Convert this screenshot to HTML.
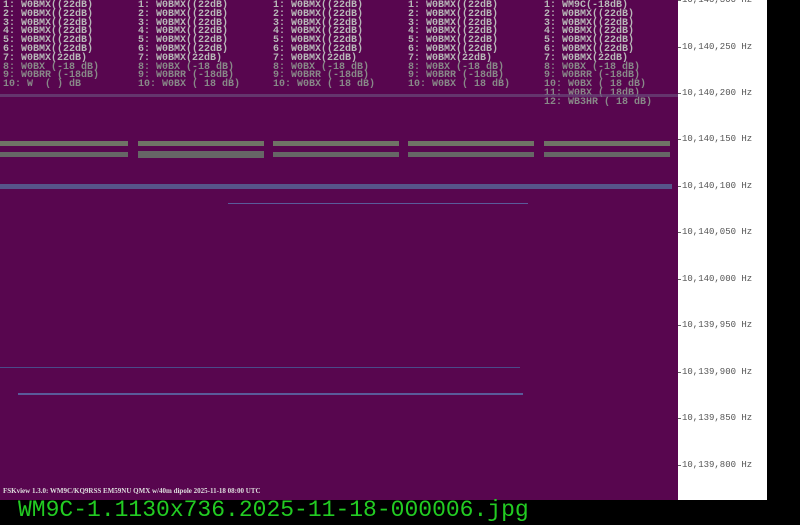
<!DOCTYPE html><html><head><style>
body{margin:0;width:800px;height:525px;background:#000;position:relative;overflow:hidden;font-family:"Liberation Mono",monospace}
#spec{position:absolute;left:0;top:0;width:678px;height:500px;background:#58064f}
#axis{position:absolute;left:678px;top:0;width:89px;height:500px;background:#fff}
.l{position:absolute;left:4px;font-size:9px;color:#555;white-space:pre;line-height:9px}
.t{position:absolute;left:0;width:3px;height:1px;background:#666}
.c{position:absolute;font-size:10px;line-height:8.8px;color:#b8b8b8;white-space:pre;font-weight:bold}
.b{position:absolute;height:5px}
#fn{position:absolute;left:18px;top:497px;font-size:23px;color:#22cc22;letter-spacing:0}
#cap{position:absolute;left:3px;top:487px;font-size:7px;color:#ddd;font-family:"Liberation Serif",serif;font-weight:bold}
</style></head><body>
<div id="spec">
<div class="c" style="left:3px;top:2px">1: W0BMX((22dB)
2: W0BMX((22dB)
3: W0BMX((22dB)
4: W0BMX((22dB)
5: W0BMX((22dB)
6: W0BMX((22dB)
7: W0BMX(22dB)
<span style="color:#888">8: W0BX (-18 dB)
9: W0BRR (-18dB)
10: W  ( ) dB</span></div>
<div class="c" style="left:138px;top:2px">1: W0BMX((22dB)
2: W0BMX((22dB)
3: W0BMX((22dB)
4: W0BMX((22dB)
5: W0BMX((22dB)
6: W0BMX((22dB)
7: W0BMX(22dB)
<span style="color:#888">8: W0BX (-18 dB)
9: W0BRR (-18dB)
10: W0BX ( 18 dB)</span></div>
<div class="c" style="left:273px;top:2px">1: W0BMX((22dB)
2: W0BMX((22dB)
3: W0BMX((22dB)
4: W0BMX((22dB)
5: W0BMX((22dB)
6: W0BMX((22dB)
7: W0BMX(22dB)
<span style="color:#888">8: W0BX (-18 dB)
9: W0BRR (-18dB)
10: W0BX ( 18 dB)</span></div>
<div class="c" style="left:408px;top:2px">1: W0BMX((22dB)
2: W0BMX((22dB)
3: W0BMX((22dB)
4: W0BMX((22dB)
5: W0BMX((22dB)
6: W0BMX((22dB)
7: W0BMX(22dB)
<span style="color:#888">8: W0BX (-18 dB)
9: W0BRR (-18dB)
10: W0BX ( 18 dB)</span></div>
<div class="c" style="left:544px;top:2px">1: WM9C(-18dB)
2: W0BMX((22dB)
3: W0BMX((22dB)
4: W0BMX((22dB)
5: W0BMX((22dB)
6: W0BMX((22dB)
7: W0BMX(22dB)
<span style="color:#888">8: W0BX (-18 dB)
9: W0BRR (-18dB)
10: W0BX ( 18 dB)
11: W0BX ( 18dB)
12: WB3HR ( 18 dB)</span></div>
<div class="b" style="left:0;top:94px;width:678px;height:3px;background:#6a4a7a;opacity:.7"></div>
<div class="b" style="left:0;top:141px;width:128px;background:#6f7366"></div>
<div class="b" style="left:138px;top:141px;width:126px;background:#6f7366"></div>
<div class="b" style="left:273px;top:141px;width:126px;background:#6f7366"></div>
<div class="b" style="left:408px;top:141px;width:126px;background:#6f7366"></div>
<div class="b" style="left:544px;top:141px;width:126px;background:#6f7366"></div>
<div class="b" style="left:0;top:152px;width:128px;background:#666"></div>
<div class="b" style="left:138px;top:151px;width:126px;height:7px;background:#666"></div>
<div class="b" style="left:273px;top:152px;width:126px;background:#666"></div>
<div class="b" style="left:408px;top:152px;width:126px;background:#666"></div>
<div class="b" style="left:544px;top:152px;width:126px;background:#666"></div>
<div class="b" style="left:0;top:184px;width:672px;background:#56548a"></div>
<div class="b" style="left:228px;top:203px;width:300px;height:1px;background:#5a5a9a"></div>
<div class="b" style="left:0;top:367px;width:520px;height:1px;background:#4a4a8a"></div>
<div class="b" style="left:18px;top:393px;width:505px;height:2px;background:#5a5a9a"></div>
<div id="cap">FSKview 1.3.0: WM9C/KQ9RSS EM59NU QMX w/40m dipole 2025-11-18 08:00 UTC</div>
</div>
<div id="axis">
<div class="l" style="top:-4px">10,140,300 Hz</div><div class="t" style="top:0"></div>
<div class="l" style="top:43px">10,140,250 Hz</div><div class="t" style="top:47px"></div>
<div class="l" style="top:89px">10,140,200 Hz</div><div class="t" style="top:93px"></div>
<div class="l" style="top:135px">10,140,150 Hz</div><div class="t" style="top:139px"></div>
<div class="l" style="top:182px">10,140,100 Hz</div><div class="t" style="top:186px"></div>
<div class="l" style="top:228px">10,140,050 Hz</div><div class="t" style="top:232px"></div>
<div class="l" style="top:275px">10,140,000 Hz</div><div class="t" style="top:279px"></div>
<div class="l" style="top:321px">10,139,950 Hz</div><div class="t" style="top:325px"></div>
<div class="l" style="top:368px">10,139,900 Hz</div><div class="t" style="top:372px"></div>
<div class="l" style="top:414px">10,139,850 Hz</div><div class="t" style="top:418px"></div>
<div class="l" style="top:461px">10,139,800 Hz</div><div class="t" style="top:465px"></div>
</div>
<div id="fn">WM9C-1.1130x736.2025-11-18-000006.jpg</div>
</body></html>
